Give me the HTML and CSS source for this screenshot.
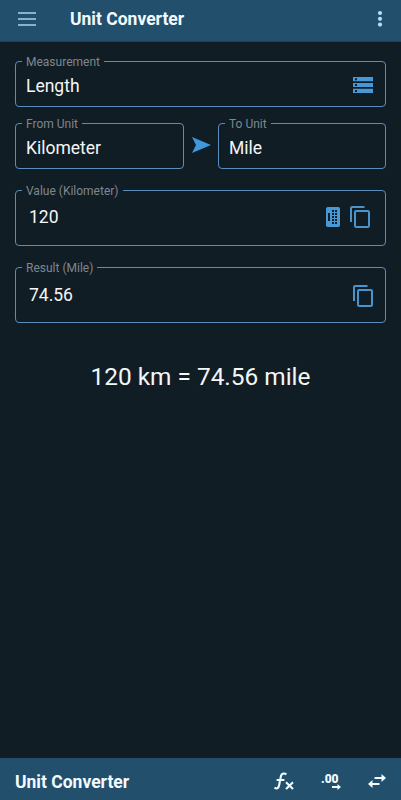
FILE: index.html
```html
<!DOCTYPE html>
<html lang="en">
<head>
  <meta charset="UTF-8">
  <title>Unit Converter</title>
  <meta name="viewport" content="width=device-width, initial-scale=1.0">
  <link rel="stylesheet" href="styles.css">
</head>
<body>
  <div class="app">
    <!-- Top bar -->
    <header class="top-bar">
      <svg class="menu-icon" width="18" height="14" viewBox="0 0 18 14">
        <path d="M0 1h18M0 7h18M0 13h18" stroke="#a9d3ea" stroke-width="1.6"/>
      </svg>
      <h1 class="title">Unit Converter</h1>
      <svg class="more-icon" width="6" height="18" viewBox="0 0 6 18" fill="#b9dcf5">
        <circle cx="3" cy="3" r="2.1"/>
        <circle cx="3" cy="8.8" r="2.1"/>
        <circle cx="3" cy="14.6" r="2.1"/>
      </svg>
    </header>

    <main class="content">
      <!-- Measurement -->
      <fieldset class="field">
        <legend>Measurement</legend>
        <div class="field-row">
          <span class="value">Length</span>
          <svg class="storage-icon" width="20" height="16" viewBox="0 0 20 16">
            <path d="M0 0h20v4.2H0zM0 5.9h20v4.2H0zM0 11.8h20V16H0z" fill="#4699d6"/>
            <path d="M2 1.2h2v2H2zM2 7h2v2H2zM2 12.9h2v2H2z" fill="#111d25"/>
          </svg>
        </div>
      </fieldset>

      <!-- Units -->
      <div class="units">
        <fieldset class="field">
          <legend>From Unit</legend>
          <div class="field-row"><span class="value">Kilometer</span></div>
        </fieldset>
        <svg class="arrow-icon" width="19" height="16" viewBox="0 0 19 16">
          <path d="M0 0L19 8L0 16L4 8z" fill="#3f97dc"/>
        </svg>
        <fieldset class="field">
          <legend>To Unit</legend>
          <div class="field-row"><span class="value">Mile</span></div>
        </fieldset>
      </div>

      <!-- Value -->
      <fieldset class="field field-tall">
        <legend>Value (Kilometer)</legend>
        <div class="field-row">
          <span class="value">120</span>
          <svg class="keypad-icon" width="14" height="20" viewBox="0 0 14 20">
            <rect width="14" height="20" rx="1.8" fill="#4699d6"/>
            <path d="M2 6h2v8H2zM6 3h2v2H6zM9 3h2v2H9zM6 6h2v2H6zM9 6h2v2H9zM6 9h2v2H6zM9 9h2v2H9zM6 12h2v2H6zM9 12h2v2H9zM6 15h2v2H6zM9 15h2v2H9z" fill="#111d25"/>
          </svg>
          <svg class="copy-icon" width="20" height="22" viewBox="0 0 20 22">
            <path d="M1 16V2.2Q1 1 2.2 1H14.5M6.2 5H17.8Q19 5 19 6.2V19.8Q19 21 17.8 21H6.2Q5 21 5 19.8V6.2Q5 5 6.2 5z" fill="none" stroke="#4b94cb" stroke-width="2"/>
          </svg>
        </div>
      </fieldset>

      <!-- Result -->
      <fieldset class="field field-tall">
        <legend>Result (Mile)</legend>
        <div class="field-row result-row">
          <span class="value">74.56</span>
          <svg class="copy-icon copy-result" width="20" height="22" viewBox="0 0 20 22">
            <path d="M1 16V2.2Q1 1 2.2 1H14.5M6.2 5H17.8Q19 5 19 6.2V19.8Q19 21 17.8 21H6.2Q5 21 5 19.8V6.2Q5 5 6.2 5z" fill="none" stroke="#4b94cb" stroke-width="2"/>
          </svg>
        </div>
      </fieldset>

      <p class="summary">120 km = 74.56 mile</p>
    </main>

    <!-- Bottom bar -->
    <footer class="bottom-bar">
      <span class="title">Unit Converter</span>
      <svg class="formula-icon" width="20" height="20" viewBox="0 0 20 20" fill="none" stroke="#f2fbff" stroke-width="2.1">
        <path d="M0.5 15.6C3.2 17.4 4.6 16.2 5.2 12.8L6.8 4.6C7.3 1.8 9.4 .6 12.4 2.2M2.6 8H10.4M12 10.2L19 17M19 10.2L12 17"/>
      </svg>
      <span class="decimals">
        <span>.00</span>
        <svg width="9" height="6" viewBox="0 0 9 6">
          <path d="M0 2.1H5.5V0L9 3L5.5 6V3.9H0z" fill="#f2fbff"/>
        </svg>
      </span>
      <svg class="swap-icon" width="18" height="14" viewBox="0 0 18 14">
        <path d="M6.5 3H13.5V0L18 4L13.5 8V5H6.5zM11.5 9H4.5V6L0 10L4.5 14V11H11.5z" fill="#f2fbff"/>
      </svg>
    </footer>
  </div>
</body>
</html>
```

FILE: styles.css
```css
* {
  box-sizing: border-box;
}
body {
  margin: 0;
  background: #111d25;
  color: #f4f6f7;
  font-family: Roboto, sans-serif;
}
svg {
  display: block;
  flex: none;
}
.app {
  display: flex;
  flex-direction: column;
  height: 800px;
}
.top-bar {
  display: flex;
  align-items: center;
  height: 42px;
  padding: 0 18px;
  background: #214f6c;
  border-bottom: 1px solid #1f4457;
}
.menu-icon {
  margin: -4px 34px 0 0;
}
.title {
  flex: 1;
  margin: 0;
  color: #f2fbff;
  font-size: 17.5px;
  line-height: 20px;
  font-weight: 700;
}
.top-bar .title {
  margin-top: -3px;
}
.more-icon {
  margin-top: -4px;
}
.content {
  flex: 1;
  display: flex;
  flex-direction: column;
  padding: 11px 15px 0;
}
.field {
  display: block;
  min-width: 0;
  height: 54px;
  margin: 0;
  padding: 0 12px 0 6px;
  border: 1px solid #5a8dbd;
  border-radius: 4px;
}
.field legend {
  padding: 2px 4px 0;
  color: #7e878e;
  font-size: 12px;
  line-height: 14px;
}
.field-row {
  display: flex;
  align-items: center;
  height: 33px;
  padding-left: 4px;
}
.value {
  flex: 1;
  font-size: 17.5px;
  line-height: 22px;
}
.storage-icon {
  margin-top: -2px;
}
.units {
  display: grid;
  grid-template-columns: 169px 1fr 168px;
  margin: 8px 0 13px;
}
.arrow-icon {
  align-self: center;
  justify-self: center;
  margin-top: 6px;
}
.field-tall {
  height: 64px;
  margin-bottom: 13px;
}
.field-tall .field-row {
  height: 38px;
  padding-left: 7px;
}
.field-tall .result-row {
  height: 40px;
}
.keypad-icon {
  margin-right: 10px;
}
.copy-icon {
  margin-right: 3px;
}
.copy-result {
  margin: 1px 0 0;
}
.summary {
  margin: 25px 0 0;
  text-align: center;
  font-size: 24.4px;
  line-height: 32px;
}
.bottom-bar {
  display: flex;
  align-items: center;
  height: 42px;
  padding: 5px 15px 0 15px;
  background: #214f6c;
}
.formula-icon {
  margin-right: 27px;
}
.decimals {
  display: flex;
  flex-direction: column;
  width: 20px;
  margin-right: 27px;
  color: #f2fbff;
  font-size: 12px;
  line-height: 10px;
  font-weight: 900;
}
.decimals svg {
  align-self: flex-end;
}
.swap-icon {
  margin-top: -1px;
}
```
